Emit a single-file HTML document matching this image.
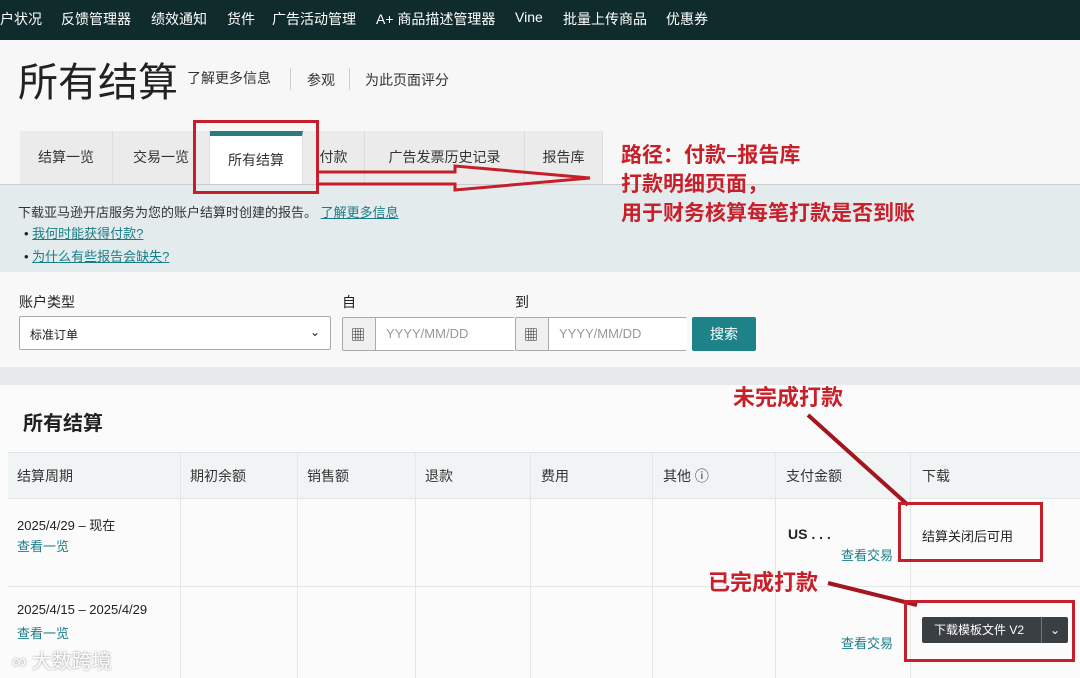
<!DOCTYPE html>
<html><head><meta charset="utf-8"><style>
*{margin:0;padding:0;box-sizing:border-box}
body{width:1080px;height:678px;overflow:hidden;background:#f4f5f5;font-family:"Liberation Sans","Noto Sans CJK SC",sans-serif;color:#222;position:relative}
.a{position:absolute;white-space:nowrap}
.nav{left:0;top:0;width:1080px;height:40px;background:#102b2c}
.nav span{position:absolute;top:9px;color:#fff;font-size:14px}
.tab{position:absolute;top:131px;height:53px;background:#ebebeb;border-right:1px solid #ddd;font-size:14px;color:#333;text-align:center;line-height:53px}
.link{color:#1a7d86;text-decoration:underline}
.red{color:#c8202a;font-weight:bold;font-family:"Noto Sans CJK SC",sans-serif}
.box{position:absolute;border:3px solid #c41f2a}
.inp{position:absolute;height:34px;background:#fff;border:1px solid #aaa;border-radius:2px}
.th{position:absolute;top:466px;font-size:14px;color:#333}
.vl{position:absolute;top:452px;width:1px;height:226px;background:#e3e7e8}
</style></head><body>
<div class="a nav">
<span style="left:0">户状况</span><span style="left:61px">反馈管理器</span><span style="left:151px">绩效通知</span><span style="left:227px">货件</span><span style="left:272px">广告活动管理</span><span style="left:376px">A+ 商品描述管理器</span><span style="left:515px">Vine</span><span style="left:563px">批量上传商品</span><span style="left:666px">优惠券</span>
</div>
<div class="a" style="left:0;top:40px;width:1080px;height:145px;background:#f7f7f7"></div>
<div class="a" style="left:18px;top:50px;font-size:40px;color:#222">所有结算</div>
<div class="a" style="left:187px;top:68px;font-size:14px;color:#333">了解更多信息</div>
<div class="a" style="left:290px;top:68px;width:1px;height:22px;background:#ccc"></div>
<div class="a" style="left:307px;top:70px;font-size:14px;color:#333">参观</div>
<div class="a" style="left:349px;top:68px;width:1px;height:22px;background:#ccc"></div>
<div class="a" style="left:365px;top:70px;font-size:14px;color:#333">为此页面评分</div>
<div class="tab" style="left:20px;width:93px">结算一览</div>
<div class="tab" style="left:113px;width:97px">交易一览</div>
<div class="tab" style="left:210px;width:93px;background:#fff;border-top:5px solid #2a7b7f;line-height:48px">所有结算</div>
<div class="tab" style="left:303px;width:62px">付款</div>
<div class="tab" style="left:365px;width:160px">广告发票历史记录</div>
<div class="tab" style="left:525px;width:78px">报告库</div>
<div class="a" style="left:0;top:184px;width:1080px;height:88px;background:#e3ebed;border-top:1px solid #ccc"></div>
<div class="a" style="left:18px;top:202px;font-size:13px;color:#333">下载亚马逊开店服务为您的账户结算时创建的报告。 <span class="link">了解更多信息</span></div>
<div class="a" style="left:24px;top:223px;font-size:13px">• <span class="link">我何时能获得付款?</span></div>
<div class="a" style="left:24px;top:246px;font-size:13px">• <span class="link">为什么有些报告会缺失?</span></div>
<div class="a" style="left:0;top:272px;width:1080px;height:95px;background:#f8f8f8"></div>
<div class="a" style="left:19px;top:292px;font-size:14px">账户类型</div>
<div class="a" style="left:342px;top:292px;font-size:14px">自</div>
<div class="a" style="left:515px;top:292px;font-size:14px">到</div>
<div class="inp" style="left:19px;top:316px;width:312px"><span class="a" style="left:10px;top:9px;font-size:12px">标准订单</span><span class="a" style="right:10px;top:8px;font-size:12px">⌄</span></div>
<div class="inp" style="left:342px;top:317px;width:173px;background:#f0f0f0"><span class="a" style="left:8px;top:7px;font-size:14px">▦</span><div class="a" style="left:32px;top:0;width:140px;height:32px;background:#fff;border-left:1px solid #aaa"><span class="a" style="left:10px;top:8px;font-size:13px;color:#999">YYYY/MM/DD</span></div></div>
<div class="inp" style="left:515px;top:317px;width:172px;background:#f0f0f0"><span class="a" style="left:8px;top:7px;font-size:14px">▦</span><div class="a" style="left:32px;top:0;width:139px;height:32px;background:#fff;border-left:1px solid #aaa"><span class="a" style="left:10px;top:8px;font-size:13px;color:#999">YYYY/MM/DD</span></div></div>
<div class="a" style="left:692px;top:317px;width:64px;height:34px;background:#1e8389;color:#fff;font-size:14px;text-align:center;line-height:34px;border-radius:2px">搜索</div>
<div class="a" style="left:0;top:367px;width:1080px;height:18px;background:#e6eaeb"></div>
<div class="a" style="left:0;top:385px;width:1080px;height:293px;background:#fbfbfb"></div>
<div class="a" style="left:23px;top:407px;font-size:20px;font-weight:bold">所有结算</div>
<div class="a" style="left:8px;top:452px;width:1072px;height:46px;background:#f0f4f5;border-top:1px solid #dde2e3"></div>
<div class="a" style="left:8px;top:498px;width:1072px;height:1px;background:#e3e7e8"></div>
<div class="a" style="left:8px;top:586px;width:1072px;height:1px;background:#e3e7e8"></div>
<div class="vl" style="left:180px"></div><div class="vl" style="left:297px"></div><div class="vl" style="left:415px"></div><div class="vl" style="left:530px"></div><div class="vl" style="left:652px"></div><div class="vl" style="left:775px"></div><div class="vl" style="left:910px"></div>
<div class="th" style="left:17px">结算周期</div><div class="th" style="left:190px">期初余额</div><div class="th" style="left:307px">销售额</div><div class="th" style="left:425px">退款</div><div class="th" style="left:541px">费用</div><div class="th" style="left:663px">其他 ⓘ</div><div class="th" style="left:786px">支付金额</div><div class="th" style="left:922px">下载</div>
<div class="a" style="left:17px;top:515px;font-size:13px">2025/4/29 – 现在</div>
<div class="a link" style="left:17px;top:536px;font-size:13px;text-decoration:none">查看一览</div>
<div class="a" style="left:788px;top:526px;font-size:14px;font-weight:bold">US . . .</div>
<div class="a link" style="left:841px;top:545px;font-size:13px;text-decoration:none">查看交易</div>
<div class="a" style="left:922px;top:526px;font-size:13px">结算关闭后可用</div>
<div class="a" style="left:17px;top:602px;font-size:13px">2025/4/15 – 2025/4/29</div>
<div class="a link" style="left:17px;top:623px;font-size:13px;text-decoration:none">查看一览</div>
<div class="a link" style="left:841px;top:633px;font-size:13px;text-decoration:none">查看交易</div>
<div class="a" style="left:922px;top:617px;width:146px;height:26px;background:#3a3f44;border-radius:2px;color:#fff;font-size:12px;line-height:26px;padding-left:12px">下载模板文件 V2<span class="a" style="left:119px;top:0;width:1px;height:26px;background:#777"></span><span class="a" style="left:128px;top:0">⌄</span></div>
<div class="a" style="left:12px;top:645px;font-size:20px;color:#fff;text-shadow:0 0 2px #888">∞ 大数跨境</div>
<div class="box" style="left:193px;top:120px;width:126px;height:74px"></div>
<svg class="a" style="left:315px;top:160px" width="290" height="40"><path d="M3 12 L140 12 L140 6 L275 18 L140 30 L140 24 L3 24" fill="none" stroke="#c41f2a" stroke-width="3"/></svg>
<div class="a red" style="left:621px;top:140px;font-size:21px;line-height:29px">路径：付款–报告库<br>打款明细页面，<br>用于财务核算每笔打款是否到账</div>
<div class="a red" style="left:733px;top:380px;font-size:22px">未完成打款</div>
<svg class="a" style="left:800px;top:410px" width="120" height="100"><path d="M8 5 L108 95" stroke="#a3151f" stroke-width="4"/></svg>
<div class="box" style="left:898px;top:502px;width:145px;height:60px"></div>
<div class="a red" style="left:708px;top:565px;font-size:22px">已完成打款</div>
<svg class="a" style="left:825px;top:575px" width="100" height="40"><path d="M3 8 L92 30" stroke="#a3151f" stroke-width="4"/></svg>
<div class="box" style="left:904px;top:600px;width:171px;height:62px"></div>
</body></html>
